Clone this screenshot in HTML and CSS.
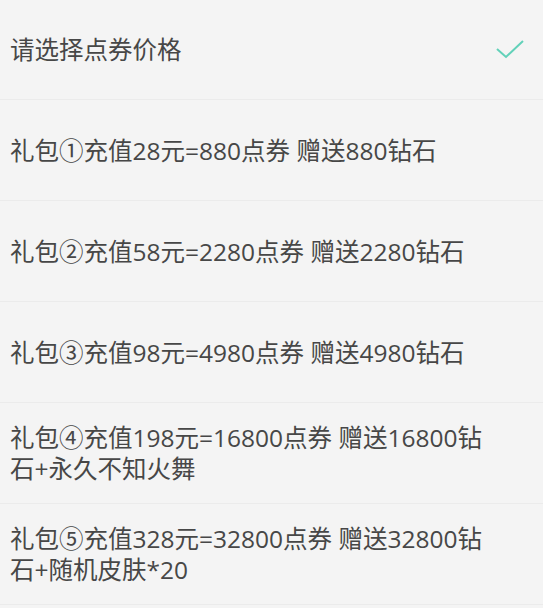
FILE: index.html
```html
<!DOCTYPE html>
<html lang="zh-CN">
<head>
  <meta charset="UTF-8" />
  <meta name="viewport" content="width=device-width, initial-scale=1.0"/>
  <title>选择点券价格</title>
  <link rel="stylesheet" href="styles.css">
</head>
<body>
  <ul class="price-list">
    <li class="price-item selected">
      <span class="label">请选择点券价格</span>
      <svg class="check" width="32" height="24" viewBox="0 0 32 24">
        <polyline points="4,11 13,19 30,3" fill="none" stroke="#62d1b9" stroke-width="2" />
      </svg>
    </li>
    <li class="price-item"><span class="label">礼包①充值28元=880点券 赠送880钻石</span></li>
    <li class="price-item"><span class="label">礼包②充值58元=2280点券 赠送2280钻石</span></li>
    <li class="price-item"><span class="label">礼包③充值98元=4980点券 赠送4980钻石</span></li>
    <li class="price-item"><span class="label">礼包④充值198元=16800点券 赠送16800钻石+永久不知火舞</span></li>
    <li class="price-item"><span class="label">礼包⑤充值328元=32800点券 赠送32800钻石+随机皮肤*20</span></li>
  </ul>
</body>
</html>
```

FILE: styles.css
```css
body {
  margin: 0;
  background-color: #f4f4f4;
  font-family: "Open Sans", "Noto Sans CJK SC", sans-serif;
  color: #474747;
}
.price-list {
  list-style: none;
  margin: 0;
  padding: 0;
}
.price-item {
  display: flex;
  align-items: center;
  justify-content: space-between;
  min-height: 101px;
  padding: 0 18px 0 10px;
  border-bottom: 1px solid #ebebeb;
  box-sizing: border-box;
  font-size: 24.5px;
  line-height: 31px;
}
.price-item:first-child {
  min-height: 100px;
}
.label {
  max-width: 485px;
}
.check {
  flex-shrink: 0;
}
```
